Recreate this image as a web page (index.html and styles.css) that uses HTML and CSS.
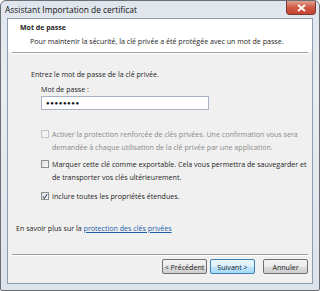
FILE: index.html
```html
<!DOCTYPE html>
<html>
<head>
<meta charset="utf-8">
<link rel="stylesheet" href="styles.css">
</head>
<body>
<div class="window">
  <div class="titlebar">
    <span class="title">Assistant Importation de certificat</span>
    <span class="close"><svg width="9" height="8" viewBox="0 0 9 8"><path d="M1 1 L8 7 M8 1 L1 7" stroke="#fff" stroke-width="1.8"/></svg></span>
  </div>
  <div class="client">
    <div class="header">
      <div class="h-title">Mot de passe</div>
      <div class="h-sub">Pour maintenir la sécurité, la clé privée a été protégée avec un mot de passe.</div>
    </div>
    <div class="sep"></div>
    <div class="content">
      <div class="intro">Entrez le mot de passe de la clé privée.</div>
      <div class="field">
        <div class="label">Mot de passe :</div>
        <div class="input">●●●●●●●●</div>
      </div>
      <div class="opts">
        <div class="opt disabled"><span class="cb"></span><span class="txt">Activer la protection renforcée de clés privées. Une confirmation vous sera demandée à chaque utilisation de la clé privée par une application.</span></div>
        <div class="opt"><span class="cb"></span><span class="txt">Marquer cette clé comme exportable. Cela vous permettra de sauvegarder et de transporter vos clés ultérieurement.</span></div>
        <div class="opt last"><span class="cb checked"><svg width="7" height="7" viewBox="0 0 7 7"><path d="M1 3.5 L2.8 5.8 L6 0.8" fill="none" stroke="#3b4a6b" stroke-width="1.2"/></svg></span><span class="txt">Inclure toutes les propriétés étendues.</span></div>
      </div>
      <div class="more">En savoir plus sur la <a class="link">protection des clés privées</a></div>
    </div>
    <div class="sep2"></div>
    <div class="buttons">
      <span class="btn">&lt; Précédent</span>
      <span class="btn def">Suivant &gt;</span>
      <span class="btn cancel">Annuler</span>
    </div>
  </div>
</div>
</body>
</html>
```

FILE: styles.css
```css
html, body { margin: 0; padding: 0; background: #fff; }
body { font-family: "Open Sans", "Noto Sans", sans-serif; font-size: 7.1px; color: #1e1e1e; }
.window {
  width: 320px; height: 291px; box-sizing: border-box;
  border: 1px solid #6a6f76; border-radius: 6px 6px 2px 2px;
  background: linear-gradient(180deg, #dfe5ec 0%, #e9edf1 30%, #dde3ea 100%);
  display: flex; flex-direction: column;
}
.titlebar { height: 17px; display: flex; align-items: flex-start; }
.title { padding: 3px 0 0 4px; font-size: 8.4px; color: #111; }
.close {
  margin-left: auto; margin-right: 3px; width: 30px; height: 14px;
  border: 1px solid #7a3a33; border-top: none; border-radius: 0 0 4px 4px;
  background: linear-gradient(180deg, #e2a08e 0%, #cf5a45 50%, #c54532 100%);
  display: flex; align-items: center; justify-content: center; box-sizing: border-box;
}
.client {
  flex: 1; margin: 0 6px 6px 6px; border: 1px solid #8e9caf;
  background: #f0f0f0; display: flex; flex-direction: column;
}
.header { background: #fff; padding: 4px 0 7px 12px; height: 22px; }
.h-title { font-weight: bold; font-size: 7px; }
.h-sub { padding: 4px 0 0 10px; }
.sep { height: 1px; background: #a0a0a0; border-bottom: 1px solid #fff; margin: 0 4px; }
.content { flex: 1; padding: 15px 0 0 23px; }
.field { padding: 5px 0 0 10px; }
.input {
  margin-top: 2px; width: 168px; height: 14px; box-sizing: border-box;
  border: 1px solid #a9b3c2; background: #fff; font-size: 6px; letter-spacing: 0.6px;
  padding: 1px 0 0 4px; line-height: 11px; color: #111;
}
.opts { padding: 18px 0 0 10px; display: flex; flex-direction: column; gap: 5px; }
.opt { display: flex; align-items: flex-start; gap: 3px; }
.opt.last { margin-top: 2px; }
.opt .txt { line-height: 12.5px; width: 256px; }
.opt.disabled .txt { color: #8a8a8a; }
.cb {
  flex: none; width: 8px; height: 8px; margin-top: 2px; box-sizing: border-box;
  border: 1px solid #8f8f8f; background: linear-gradient(135deg, #dcdcdc, #fafafa);
  display: flex; align-items: center; justify-content: center;
}
.disabled .cb { border-color: #c4c4c4; background: #f4f4f4; }
.more { padding: 20px 0 0 0; margin-left: -15px; }
.link { color: #1c5fa8; text-decoration: underline; }
.sep2 { height: 1px; background: #a0a0a0; border-bottom: 1px solid #fff; margin: 0 4px; }
.buttons { display: flex; justify-content: flex-end; gap: 3px; padding: 3px 4px 9px 0; }
.btn {
  width: 45px; height: 15px; box-sizing: border-box; border: 1px solid #707070; border-radius: 2px;
  background: linear-gradient(180deg, #f2f2f2 0%, #ebebeb 50%, #dcdcdc 51%, #cfcfcf 100%);
  display: flex; align-items: center; justify-content: center; font-size: 7.1px;
}
.btn.def { border-color: #3c7fb1; background: linear-gradient(180deg, #eaf6fd 0%, #d9f0fc 50%, #bee6fd 51%, #a7d9f5 100%); }
.btn.cancel { margin-left: 5px; }
```
